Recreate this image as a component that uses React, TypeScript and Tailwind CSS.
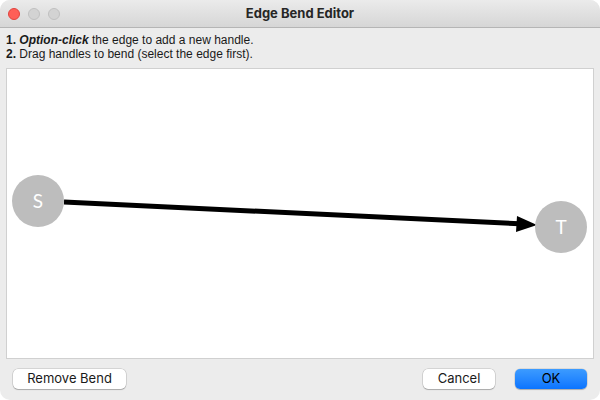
export default function App() {
  return (
    <div className="w-[600px] h-[400px] bg-white" style={{ fontFamily: "Inter, 'Liberation Sans', sans-serif" }}>
      <div className="w-full h-full rounded-[10px] overflow-hidden bg-[#ececec] flex flex-col">
        {/* title bar */}
        <div className="relative h-[28px] shrink-0 bg-gradient-to-b from-[#ebebeb] to-[#d6d6d6] border-b border-[#b5b5b5] flex items-center justify-center">
          <div className="absolute left-[8px] top-[8px] flex gap-[8px]">
            <span className="w-[12px] h-[12px] rounded-full bg-[#fe5f57] border border-[#e0443e]" />
            <span className="w-[12px] h-[12px] rounded-full bg-[#d3d3d3] border border-[#c0c0c0]" />
            <span className="w-[12px] h-[12px] rounded-full bg-[#d3d3d3] border border-[#c0c0c0]" />
          </div>
          <span className="text-[13px] font-bold text-[#262626]">Edge Bend Editor</span>
        </div>

        {/* instructions */}
        <div className="px-[6px] pt-[5px] text-[12px] leading-[14px] text-[#1a1a1a] font-['Liberation_Sans',sans-serif]">
          <div>
            <b>1.</b> <b><i>Option-click</i></b> the edge to add a new handle.
          </div>
          <div>
            <b>2.</b> Drag handles to bend (select the edge first).
          </div>
        </div>

        {/* canvas */}
        <div className="mx-[6px] mt-[7px] h-[291px] bg-white border border-[#d0d0d0] relative">
          <svg width="588" height="291" className="absolute left-0 top-0">
            <line x1="57" y1="133" x2="518" y2="155" stroke="#000" strokeWidth="5" />
            <polygon points="530,156 510,147 509,163" fill="#000" />
            <circle cx="31" cy="132" r="26" fill="#bdbdbd" />
            <circle cx="554" cy="158" r="26" fill="#bdbdbd" />
            <text x="31" y="139" textAnchor="middle" fill="#fff" fontSize="19" fontFamily="Lato, 'Open Sans', sans-serif">S</text>
            <text x="554" y="165" textAnchor="middle" fill="#fff" fontSize="19" fontFamily="Lato, 'Open Sans', sans-serif">T</text>
          </svg>
        </div>

        {/* buttons */}
        <div className="flex items-center px-[13px] mt-[10px] text-[13px] text-[#1a1a1a]">
          <button className="w-[113px] h-[20px] bg-white rounded-[5px] shadow-[0_0_0_0.5px_rgba(0,0,0,0.2),0_1px_1px_rgba(0,0,0,0.2)]">
            Remove Bend
          </button>
          <div className="flex-1" />
          <button className="w-[72px] h-[20px] bg-white rounded-[5px] shadow-[0_0_0_0.5px_rgba(0,0,0,0.2),0_1px_1px_rgba(0,0,0,0.2)]">
            Cancel
          </button>
          <button className="ml-[20px] w-[72px] h-[20px] rounded-[5px] text-black bg-gradient-to-b from-[#3c9bff] to-[#0a74ff] shadow-[0_0_0_0.5px_rgba(0,0,0,0.15),0_1px_1px_rgba(0,0,0,0.2)]">
            OK
          </button>
        </div>
      </div>
    </div>
  );
}
